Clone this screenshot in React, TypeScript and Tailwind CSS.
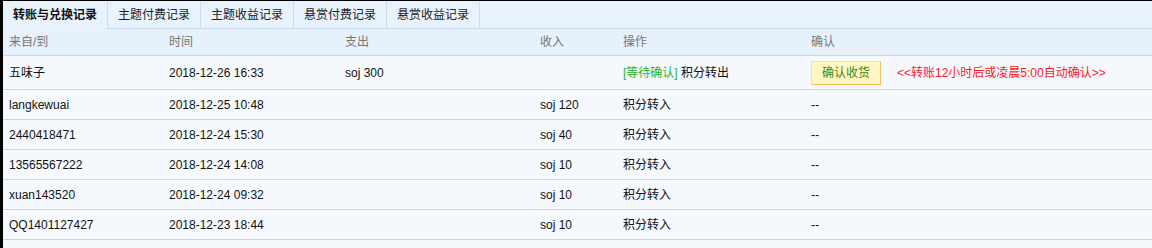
import React from 'react';

const tabs = ['转账与兑换记录', '主题付费记录', '主题收益记录', '悬赏付费记录', '悬赏收益记录'];

const rows = [
    { who: 'langkewuai', time: '2018-12-25 10:48', income: 'soj 120' },
    { who: '2440418471', time: '2018-12-24 15:30', income: 'soj 40' },
    { who: '13565567222', time: '2018-12-24 14:08', income: 'soj 10' },
    { who: 'xuan143520', time: '2018-12-24 09:32', income: 'soj 10' },
    { who: 'QQ1401127427', time: '2018-12-23 18:44', income: 'soj 10' },
];

const cols = 'grid grid-cols-[166px_176px_195px_83px_188px_1fr] items-center';

export default function App() {
    return (
        <div className="w-[1152px] h-[248px] bg-black pl-[3px] pt-[1px] overflow-hidden text-[12px] font-['Liberation_Sans','Noto_Sans_CJK_SC',sans-serif]">
            <div className="h-full bg-[#f5f9fe]">

                {/* tabs */}
                <div className="flex h-[28px] bg-[#e8f2fc]">
                    {tabs.map((t, i) => (
                        <div
                            key={t}
                            className={
                                i === 0
                                    ? 'h-full px-[10px] flex items-center font-bold text-[#111] border-r border-[#c9dcee]'
                                    : 'h-full px-[10px] flex items-center text-[#222] border-r border-b border-[#c9dcee]'
                            }
                        >
                            {t}
                        </div>
                    ))}
                    <div className="flex-1 border-b border-[#c9dcee]" />
                </div>

                {/* header */}
                <div className={cols + ' h-[27px] bg-[#e6f1fc] text-[#777] border-b border-[#c9d9e9]'}>
                    <div className="pl-[6px]">来自/到</div>
                    <div>时间</div>
                    <div>支出</div>
                    <div>收入</div>
                    <div>操作</div>
                    <div>确认</div>
                </div>

                {/* pending row */}
                <div className={cols + ' h-[34px] text-[#111] border-b border-[#c9d9e9]'}>
                    <div className="pl-[6px]">五味子</div>
                    <div>2018-12-26 16:33</div>
                    <div>soj 300</div>
                    <div></div>
                    <div>
                        <span className="text-[#1fb51f]">[等待确认]</span> 积分转出
                    </div>
                    <div className="flex items-center">
                        <button className="w-[70px] h-[24px] bg-[#fff6c2] border border-[#f6e39a] border-r-[#f2c25a] border-b-[#f2c25a] text-[#3d8a16] text-[12px]">
                            确认收货
                        </button>
                        <span className="ml-[16px] text-[#ff1a1a]">&lt;&lt;转账12小时后或凌晨5:00自动确认&gt;&gt;</span>
                    </div>
                </div>

                {rows.map(r => (
                    <div key={r.who} className={cols + ' h-[30px] text-[#111] border-b border-[#c9d9e9]'}>
                        <div className="pl-[6px]">{r.who}</div>
                        <div>{r.time}</div>
                        <div></div>
                        <div>{r.income}</div>
                        <div>积分转入</div>
                        <div>--</div>
                    </div>
                ))}
            </div>
        </div>
    );
}
